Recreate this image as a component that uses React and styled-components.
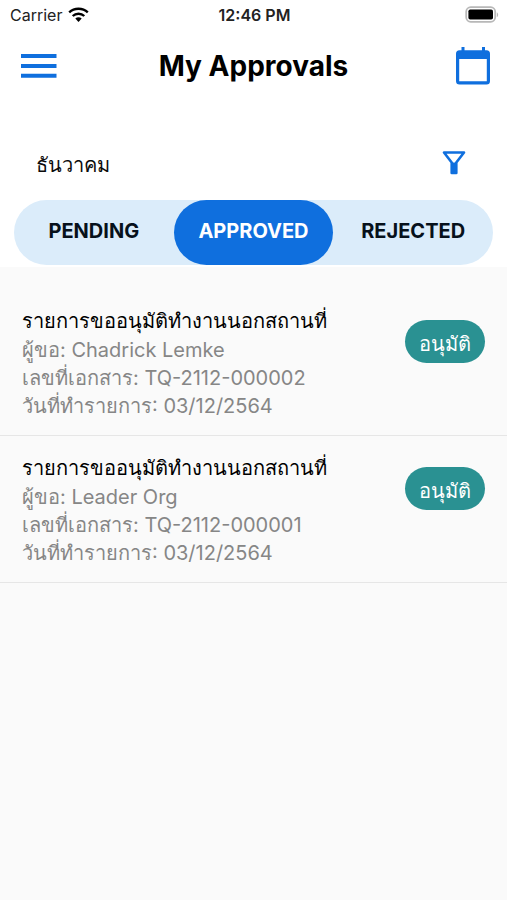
import React, { useState } from "react";
import styled, { createGlobalStyle } from "styled-components";

const blue = "#0f6fde";

const GlobalStyle = createGlobalStyle`
  * { box-sizing: border-box; }
  body {
    margin: 0;
    background: #fafafa;
    color: #0c0c0c;
    font-family: Inter, "Noto Sans", sans-serif;
    font-size: 20px;
  }
  h1, h2, p, ul { margin: 0; padding: 0; }
  button { font: inherit; color: inherit; border: 0; padding: 0; background: none; cursor: pointer; }
  svg { display: block; }
`;

const Screen = styled.div`
  min-height: 100vh;
  background: #fafafa;
`;

const Top = styled.header`
  background: #fff;
  padding-bottom: 2px;
`;

const StatusBar = styled.div`
  display: grid;
  grid-template-columns: 1fr auto 1fr;
  align-items: center;
  height: 30px;
  padding: 0 8px 0 10px;
  font-size: 16px;
  line-height: 20px;
  color: #222;
`;

const Carrier = styled.span`
  display: flex;
  align-items: center;
  gap: 6px;
`;

const Clock = styled.time`
  font-weight: 600;
`;

const Battery = styled.span`
  justify-self: end;
`;

const AppBar = styled.div`
  display: grid;
  grid-template-columns: 1fr auto 1fr;
  align-items: center;
  height: 72px;
  padding: 0 16px;
`;

const Title = styled.h1`
  font-size: 28px;
  line-height: 36px;
  font-weight: 700;
  color: #000;
`;

const IconButton = styled.button`
  && {
    display: flex;
    color: ${blue};
    justify-self: ${({ $end }) => ($end ? "end" : "start")};
  }
`;

const FilterRow = styled.div`
  display: flex;
  align-items: center;
  justify-content: space-between;
  margin-top: 40px;
  height: 58px;
  padding: 0 40px 16px 36px;
`;

const Month = styled.p`
  line-height: 28px;
  padding-top: 3px;
`;

const Tabs = styled.div`
  display: grid;
  grid-template-columns: repeat(3, 1fr);
  margin: 0 14px;
  height: 65px;
  border-radius: 33px;
  background: #dbecfa;
`;

const Tab = styled.button`
  && {
    height: 65px;
    padding-bottom: 3px;
    border-radius: 33px;
    font-size: 20px;
    font-weight: 700;
    color: ${({ $active }) => ($active ? "#fff" : "#07111b")};
    background: ${({ $active }) => ($active ? blue : "transparent")};
  }
`;

const List = styled.ul`
  list-style: none;
  && { padding-top: 22px; }
`;

const Item = styled.li`
  display: flex;
  align-items: flex-start;
  justify-content: space-between;
  padding: 18px 22px 15px;
  border-bottom: 1px solid #e6e6e6;
`;

const ItemTitle = styled.h2`
  && { margin-bottom: 1px; }
  font-size: 20px;
  line-height: 28px;
  font-weight: 400;
  color: #000;
`;

const Detail = styled.p`
  line-height: 28px;
  color: #868686;
`;

const Badge = styled.span`
  display: flex;
  align-items: center;
  height: 43px;
  margin-top: 13px;
  padding: 4px 14px 0;
  border-radius: 22px;
  background: #2a9192;
  color: #fff;
`;

const approvals = [
  { title: "รายการขออนุมัติทำงานนอกสถานที่", requester: "Chadrick Lemke", doc: "TQ-2112-000002", date: "03/12/2564", status: "อนุมัติ" },
  { title: "รายการขออนุมัติทำงานนอกสถานที่", requester: "Leader Org", doc: "TQ-2112-000001", date: "03/12/2564", status: "อนุมัติ" },
];

const WifiIcon = () => (
  <svg width="21" height="17" viewBox="0 0 21 17" aria-hidden="true">
    <g fill="none" stroke="#000" strokeWidth="2.4">
      <path d="M1.200 5.400C6.400.600 14.600.600 19.800 5.400" />
      <path d="M4.700 9c3.300-3.100 8.300-3.100 11.600 0" />
    </g>
    <path d="M7.300 11.600c1.800-1.700 4.600-1.700 6.400 0l-3.200 3.300z" fill="#000" />
  </svg>
);

const BatteryIcon = () => (
  <svg width="34" height="18" viewBox="0 0 34 18" aria-hidden="true">
    <rect x="1.2" y="1.2" width="29" height="14.600" rx="4.5" fill="#fff" stroke="#b8b8b8" strokeWidth="1.8" />
    <rect x="3.4" y="3.4" width="24.6" height="10.2" rx="1.8" fill="#000" />
    <path d="M31.8 6.4c1.8.6 1.8 4 0 4.6z" fill="#b8b8b8" />
  </svg>
);

const MenuIcon = () => (
  <svg width="41" height="26" viewBox="0 0 41 26" fill="currentColor" aria-hidden="true">
    <path d="M5 1h35.500v4H5zM5 11h35.500v4H5zM5 20.700h35.500v4H5z" />
  </svg>
);

const CalendarIcon = () => (
  <svg width="36" height="38" viewBox="0 0 36 38" fill="currentColor" fillRule="evenodd" aria-hidden="true">
    <path d="M6.500 0h3v3.200h17.500V0h3v3.200h1.500a3.500 3.500 0 0 1 3.500 3.500v27.300a3.500 3.500 0 0 1-3.500 3.500h-27A3.500 3.500 0 0 1 1 34V6.700a3.500 3.500 0 0 1 3.500-3.500h2zM4.200 12v22.300h27.600V12z" />
  </svg>
);

const FunnelIcon = () => (
  <svg width="26" height="26" viewBox="0 0 26 26" aria-hidden="true">
    <path d="M3 2.500h20L15.300 12.500v10.500h-4.600v-10.500z" fill="#fff" stroke="currentColor" strokeWidth="2.600" strokeLinejoin="round" />
    <path d="M10.500 12.500h5v10.500h-5z" fill="currentColor" />
  </svg>
);

export default function App() {
  const [tab, setTab] = useState("APPROVED");
  return (
    <Screen>
      <GlobalStyle />
      <Top>
        <StatusBar>
          <Carrier>Carrier <WifiIcon /></Carrier>
          <Clock>12:46 PM</Clock>
          <Battery><BatteryIcon /></Battery>
        </StatusBar>
        <AppBar>
          <IconButton aria-label="Menu"><MenuIcon /></IconButton>
          <Title>My Approvals</Title>
          <IconButton $end aria-label="Calendar"><CalendarIcon /></IconButton>
        </AppBar>
        <FilterRow>
          <Month>ธันวาคม</Month>
          <IconButton aria-label="Filter"><FunnelIcon /></IconButton>
        </FilterRow>
        <Tabs role="tablist">
          {["PENDING", "APPROVED", "REJECTED"].map((name) => (
            <Tab key={name} role="tab" aria-selected={tab === name} $active={tab === name} onClick={() => setTab(name)}>
              {name}
            </Tab>
          ))}
        </Tabs>
      </Top>
      <List>
        {approvals.map((item) => (
          <Item key={item.doc}>
            <div>
              <ItemTitle>{item.title}</ItemTitle>
              <Detail>ผู้ขอ: {item.requester}</Detail>
              <Detail>เลขที่เอกสาร: {item.doc}</Detail>
              <Detail>วันที่ทำรายการ: {item.date}</Detail>
            </div>
            <Badge>{item.status}</Badge>
          </Item>
        ))}
      </List>
    </Screen>
  );
}
